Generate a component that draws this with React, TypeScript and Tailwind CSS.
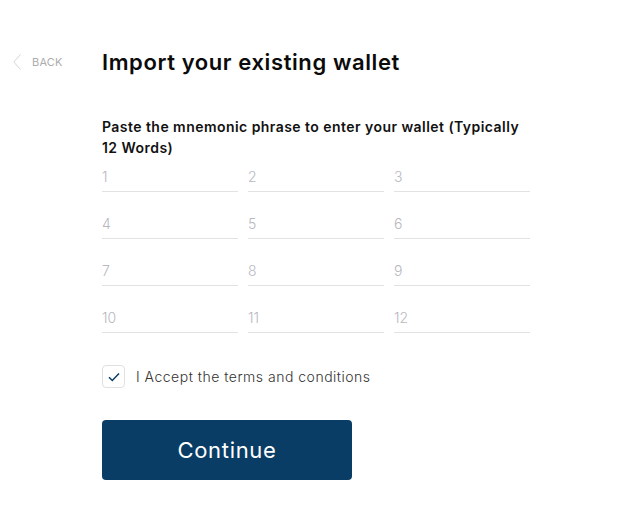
import React from "react";

export default function App() {
  const nums = Array.from({ length: 12 }, (_, i) => String(i + 1));
  return (
    <div
      className="w-[637px] h-[515px] bg-white flex pt-[47px]"
      style={{ fontFamily: "Inter, 'Noto Sans', sans-serif" }}
    >
      <div className="w-[102px] shrink-0 pl-[13px] pt-[7px]">
        <div className="flex items-center gap-[11px] h-[16px]">
          <svg width="8" height="16" viewBox="0 0 8 16" fill="none">
            <path d="M7.5 0.5 L0.8 8 L7.5 15.5" stroke="#d4d4d4" strokeWidth="1" />
          </svg>
          <span className="text-[11px] text-[#adadad] leading-none tracking-[0.2px]">BACK</span>
        </div>
      </div>
      <div className="w-[428px]">
        <h1 className="text-[22px] leading-[30px] font-semibold text-[#0b0b0b] tracking-[0.6px]">
          Import your existing wallet
        </h1>
        <p className="mt-[39px] w-[460px] text-[14px] leading-[21px] font-semibold text-[#111] tracking-[0.45px]">
          Paste the mnemonic phrase to enter your wallet (Typically
          <br />
          12 Words)
        </p>
        <div className="grid grid-cols-3 gap-x-[10px] gap-y-[13px]">
          {nums.map((n) => (
            <input
              key={n}
              placeholder={n}
              className="h-[34px] pt-[4px] border-b border-[#e2e2e2] text-[14px] font-light text-[#333] placeholder:text-[#b8b8c0] outline-none bg-transparent"
            />
          ))}
        </div>
        <label className="mt-[32px] flex items-center gap-[11px]">
          <span className="w-[23px] h-[23px] rounded-[4px] border border-[#e0e0e0] flex items-center justify-center">
            <svg width="12" height="10" viewBox="0 0 12 10" fill="none">
              <path d="M1 5.2 L4.3 8.5 L11 1.5" stroke="#0a3d66" strokeWidth="1.5" />
            </svg>
          </span>
          <span className="text-[14px] font-light text-[#333] tracking-[0.5px]">I Accept the terms and conditions</span>
        </label>
        <button className="mt-[32px] w-[250px] h-[60px] rounded-[4px] bg-[#093d66] text-white text-[22px] font-normal tracking-[0.7px]">
          Continue
        </button>
      </div>
    </div>
  );
}
